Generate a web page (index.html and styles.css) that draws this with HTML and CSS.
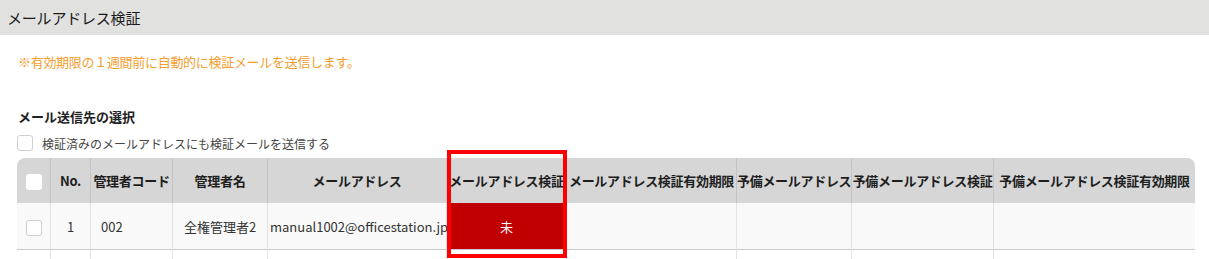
FILE: index.html
```html
<!DOCTYPE html>
<html lang="ja">
<head>
    <meta charset="UTF-8">
    <meta name="viewport" content="width=device-width, initial-scale=1.0">
    <title>メールアドレス検証</title>
    <link rel="stylesheet" href="styles.css">
</head>
<body>

<header class="title-bar">メールアドレス検証</header>

<div class="content">
    <p class="note">※有効期限の１週間前に自動的に検証メールを送信します。</p>

    <h2 class="section-title">メール送信先の選択</h2>
    <label class="check-row">
        <span class="check-box"></span>
        <span>検証済みのメールアドレスにも検証メールを送信する</span>
    </label>

    <div class="table-wrap">
        <table class="mail-table">
            <colgroup>
                <col style="width:34px">
                <col style="width:40px">
                <col style="width:82px">
                <col style="width:95px">
                <col style="width:179px">
                <col style="width:120px">
                <col style="width:170px">
                <col style="width:115px">
                <col style="width:142px">
                <col style="width:201px">
            </colgroup>
            <thead>
                <tr>
                    <th><span class="check-box white"></span></th>
                    <th>No.</th>
                    <th>管理者コード</th>
                    <th>管理者名</th>
                    <th>メールアドレス</th>
                    <th>メールアドレス検証</th>
                    <th>メールアドレス検証有効期限</th>
                    <th>予備メールアドレス</th>
                    <th>予備メールアドレス検証</th>
                    <th>予備メールアドレス検証有効期限</th>
                </tr>
            </thead>
            <tbody>
                <tr>
                    <td class="center"><span class="check-box"></span></td>
                    <td class="center">1</td>
                    <td class="code">002</td>
                    <td class="center">全権管理者2</td>
                    <td class="email">manual1002@officestation.jp</td>
                    <td class="center unverified">未</td>
                    <td></td>
                    <td></td>
                    <td></td>
                    <td></td>
                </tr>
                <tr>
                    <td></td><td></td><td></td><td></td><td></td>
                    <td></td><td></td><td></td><td></td><td></td>
                </tr>
            </tbody>
        </table>
        <!-- highlight around the verification column -->
        <div class="highlight"></div>
    </div>
</div>

</body>
</html>
```

FILE: styles.css
```css
body {
    margin: 0;
    padding: 0;
    font-family: "Noto Sans CJK JP", "Noto Sans", sans-serif;
    font-size: 13px;
    color: #333;
    background-color: #fff;
}
.title-bar {
    height: 35px;
    line-height: 35px;
    padding-left: 7px;
    background-color: #e1e1e0;
    color: #1a1a1a;
    font-size: 15px;
    letter-spacing: -0.2px;
}
.content {
    padding: 0 14px 0 17px;
}
.note {
    margin: 18px 0 0 1px;
    line-height: 18px;
    color: #f59d2c;
    letter-spacing: -0.3px;
}
.section-title {
    margin: 37px 0 0 1px;
    font-size: 13px;
    line-height: 18px;
    font-weight: bold;
    color: #222;
}
.check-row {
    display: flex;
    align-items: center;
    gap: 9px;
    margin-top: 8px;
    height: 18px;
    font-size: 12px;
    color: #444;
}
.check-box {
    display: inline-block;
    width: 16px;
    height: 16px;
    box-sizing: border-box;
    border: 1px solid #cfcfcf;
    border-radius: 3px;
    background-color: #fff;
    vertical-align: middle;
}
.check-box.white {
    border-color: #fff;
}
.table-wrap {
    position: relative;
    margin-top: 6px;
    width: 1178px;
}
.mail-table {
    width: 1178px;
    table-layout: fixed;
    border-collapse: separate;
    border-spacing: 0;
    border-radius: 8px 8px 0 0;
    overflow: hidden;
}
.mail-table th {
    height: 45px;
    padding: 0;
    background-color: #d6d6d6;
    border-right: 1px solid #c3c3c3;
    font-size: 13px;
    font-weight: bold;
    letter-spacing: -0.3px;
    color: #1e1e1e;
    white-space: nowrap;
    text-align: center;
}
.mail-table th:last-child,
.mail-table td:last-child {
    border-right: none;
}
.mail-table td {
    height: 46px;
    padding: 0;
    background-color: #f9f9f9;
    border-right: 1px solid #e2e2e2;
    border-bottom: 1px solid #c9c9c9;
    white-space: nowrap;
    overflow: visible;
}
.mail-table tbody tr + tr td {
    background-color: #fff;
}
.center {
    text-align: center;
}
.code {
    padding-left: 10px !important;
}
.email {
    padding-left: 2px !important;
}
.mail-table td.unverified {
    background-color: #c00000;
    color: #fff;
}
.highlight {
    position: absolute;
    left: 430px;
    top: -8px;
    width: 120px;
    height: 108px;
    box-sizing: border-box;
    border: 4px solid #ff0000;
}
```
